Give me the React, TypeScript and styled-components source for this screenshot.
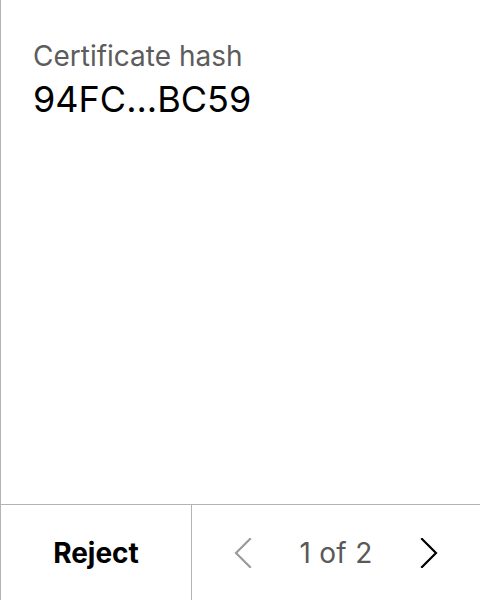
import React from "react";
import styled, { createGlobalStyle } from "styled-components";

const Global = createGlobalStyle`
  html, body { margin: 0; padding: 0; background: #ffffff; }
  body { font-family: Inter, "Noto Sans", sans-serif; }
`;

const Frame = styled.div`
  box-sizing: border-box;
  width: 480px;
  height: 600px;
  border-left: 1px solid #b3b3b3;
  display: flex;
  flex-direction: column;
  background: #fff;
`;

const Content = styled.div`
  flex: 1;
  padding: 39px 32px 0;
  display: flex;
  flex-direction: column;
  gap: 4px;
`;

const Label = styled.div`
  font-size: 28px;
  color: #5c5c5c;
  line-height: 34px;
`;

const Value = styled.div`
  font-size: 36px;
  color: #000;
  line-height: 44px;
`;

const Footer = styled.div`
  height: 95px;
  border-top: 1px solid #b3b3b3;
  display: grid;
  grid-template-columns: 191px 1fr;
`;

const RejectButton = styled.button`
  border: none;
  border-right: 1px solid #b3b3b3;
  background: transparent;
  font-family: Inter, "Noto Sans", sans-serif;
  font-weight: 700;
  font-size: 28px;
  color: #000;
  padding: 0;
  cursor: pointer;
`;

const Pager = styled.div`
  display: flex;
  align-items: center;
  justify-content: space-between;
  padding: 0 42px;
`;

const PageText = styled.span`
  font-size: 28px;
  color: #595959;
  letter-spacing: 0.3px;
`;

const Arrow = styled.button<{ $disabled?: boolean }>`
  border: none;
  background: transparent;
  padding: 0;
  display: flex;
  color: ${(p) => (p.$disabled ? "#9a9a9a" : "#000")};
`;

const Chevron = ({ dir }: { dir: "left" | "right" }) => (
  <svg width="18" height="30" viewBox="0 0 18 30" fill="none">
    <path
      d={dir === "left" ? "M16 1 L2 15 L16 29" : "M2 1 L16 15 L2 29"}
      stroke="currentColor"
      strokeWidth="2.2"
      strokeLinecap="square"
    />
  </svg>
);

export default function App() {
  return (
    <>
      <Global />
      <Frame>
        <Content>
          <Label>Certificate hash</Label>
          <Value>94FC...BC59</Value>
        </Content>
        <Footer>
          <RejectButton>Reject</RejectButton>
          <Pager>
            <Arrow $disabled>
              <Chevron dir="left" />
            </Arrow>
            <PageText>1 of 2</PageText>
            <Arrow>
              <Chevron dir="right" />
            </Arrow>
          </Pager>
        </Footer>
      </Frame>
    </>
  );
}
